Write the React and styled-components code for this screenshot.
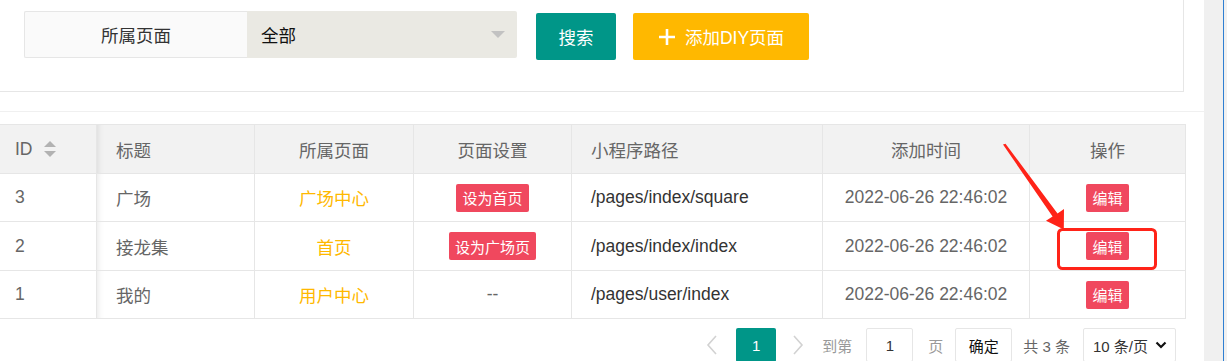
import React from 'react'
import styled, { createGlobalStyle } from 'styled-components'

const GlobalStyle = createGlobalStyle`
  html, body {
    margin: 0;
    padding: 0;
    background: #fff;
    overflow: hidden;
  }
  body {
    font-family: "Liberation Sans", "Noto Sans CJK SC", sans-serif;
  }
  * { box-sizing: border-box; }
`

const columns = [
  { key: 'id', title: 'ID', width: 97, align: 'flex-start', pad: 15, sort: true },
  { key: 'title', title: '标题', width: 158, align: 'flex-start', shadow: true },
  { key: 'page', title: '所属页面', width: 159, align: 'center' },
  { key: 'setting', title: '页面设置', width: 158, align: 'center' },
  { key: 'path', title: '小程序路径', width: 251, align: 'flex-start' },
  { key: 'time', title: '添加时间', width: 207, align: 'center' },
  { key: 'op', title: '操作', width: 156, align: 'center' },
]

const rows = [
  { id: 3, h: 48, title: '广场', page: '广场中心', setting: '设为首页', path: '/pages/index/square', time: '2022-06-26 22:46:02' },
  { id: 2, h: 49, title: '接龙集', page: '首页', setting: '设为广场页', path: '/pages/index/index', time: '2022-06-26 22:46:02' },
  { id: 1, h: 48, title: '我的', page: '用户中心', setting: null, path: '/pages/user/index', time: '2022-06-26 22:46:02' },
]

function renderCell(col, row) {
  switch (col.key) {
    case 'page':
      return <PageName>{row.page}</PageName>
    case 'setting':
      return row.setting ? <DangerBtn>{row.setting}</DangerBtn> : <span>--</span>
    case 'path':
      return <PathText>{row.path}</PathText>
    case 'op':
      return <DangerBtn>编辑</DangerBtn>
    default:
      return row[col.key]
  }
}

const SortIcon = () => (
  <SortSvg width="12" height="16" viewBox="0 0 12 16">
    <polygon points="0,6 6,0 12,6" fill="#b2b2b2" />
    <polygon points="0,10 12,10 6,16" fill="#b2b2b2" />
  </SortSvg>
)

const Annotation = () => (
  <Overlay width="1204" height="361" viewBox="0 0 1204 361">
    <polygon
      points="1003,144.5 1005.5,143.8 1057.5,213.4 1064,209 1063.8,229.5 1046,220.8 1052.6,216.6"
      fill="#ff2318"
    />
    <rect x="1058.5" y="229.5" width="97" height="39" rx="4" fill="none" stroke="#ff2318" strokeWidth="3" />
  </Overlay>
)

export default function App() {
  return (
    <Screen>
      <GlobalStyle />
      <Main>
        <FilterCard>
          <FormRow>
            <FieldLabel>所属页面</FieldLabel>
            <FieldSelect>
              <span>全部</span>
              <svg width="14" height="7" viewBox="0 0 14 7">
                <polygon points="0,0 14,0 7,7" fill="#c2c2c2" />
              </svg>
            </FieldSelect>
            <ActionBtn $bg="#009688" $w={80} $ml={19}>搜索</ActionBtn>
            <ActionBtn $bg="#ffb800" $w={176} $ml={17}>
              <svg width="18" height="18" viewBox="0 0 18 18">
                <path d="M9 1v16M1 9h16" stroke="#fff" strokeWidth="2.6" />
              </svg>
              <span>添加DIY页面</span>
            </ActionBtn>
          </FormRow>
        </FilterCard>
        <Divider />
        <Table>
          <Row $head $h={49}>
            {columns.map(col => (
              <Cell key={col.key} $w={col.width} $align={col.align} $pad={col.pad} $shadow={col.shadow}>
                {col.title}
                {col.sort && <SortIcon />}
              </Cell>
            ))}
          </Row>
          {rows.map(row => (
            <Row key={row.id} $h={row.h}>
              {columns.map(col => (
                <Cell key={col.key} $w={col.width} $align={col.align} $pad={col.pad} $shadow={col.shadow}>
                  {renderCell(col, row)}
                </Cell>
              ))}
            </Row>
          ))}
        </Table>
        <Pager>
          <Arrow width="12" height="20" viewBox="0 0 12 20" $ml={0} $mr={18}>
            <path d="M10 1L2 10l8 9" fill="none" stroke="#d2d2d2" strokeWidth="1.6" />
          </Arrow>
          <PageCurrent>1</PageCurrent>
          <Arrow width="12" height="20" viewBox="0 0 12 20" $ml={16} $mr={18}>
            <path d="M2 1l8 9-8 9" fill="none" stroke="#d2d2d2" strokeWidth="1.6" />
          </Arrow>
          <PagerText $color="#999">到第</PagerText>
          <PagerInput>1</PagerInput>
          <PagerText $color="#999" $ml={15}>页</PagerText>
          <PagerBtn>确定</PagerBtn>
          <PagerText $color="#666" $ml={11}>共 3 条</PagerText>
          <PagerSelect>
            <span>10 条/页</span>
            <svg width="12" height="8" viewBox="0 0 12 8">
              <path d="M1.5 1.5L6 6l4.5-4.5" fill="none" stroke="#111" strokeWidth="2.2" />
            </svg>
          </PagerSelect>
        </Pager>
        <Annotation />
      </Main>
      <SideStrip />
    </Screen>
  )
}

const Screen = styled.div`
  display: flex;
  width: 1227px;
  height: 361px;
  overflow: hidden;
`

const Main = styled.div`
  position: relative;
  flex: none;
  width: 1204px;
  background: #fff;
`

const SideStrip = styled.div`
  flex: 1;
  background: linear-gradient(to right, #f0f0f0 19px, #2f7fd2 19px, #2f7fd2 20px, #f0f0f0 20px);
`

const FilterCard = styled.div`
  width: 1184px;
  height: 92px;
  border-right: 1px solid #e6e6e6;
  border-bottom: 1px solid #e6e6e6;
  padding: 11px 0 0 24px;
`

const FormRow = styled.div`
  display: flex;
  align-items: flex-start;
`

const FieldLabel = styled.div`
  width: 223px;
  height: 47px;
  display: flex;
  align-items: center;
  justify-content: center;
  background: #fafafa;
  border: 1px solid #e6e6e6;
  border-right: none;
  border-radius: 2px 0 0 2px;
  font-size: 17.5px;
  color: #333;
`

const FieldSelect = styled.div`
  width: 270px;
  height: 47px;
  display: flex;
  align-items: center;
  justify-content: space-between;
  padding: 0 12px 0 14px;
  background: #eae9e3;
  border-radius: 0 2px 2px 0;
  font-size: 17.5px;
  color: #111;
`

const ActionBtn = styled.div`
  width: ${p => p.$w}px;
  height: 47px;
  margin: 2px 0 0 ${p => p.$ml}px;
  display: flex;
  align-items: center;
  justify-content: center;
  gap: 9px;
  background: ${p => p.$bg};
  border-radius: 2px;
  color: #fff;
  font-size: 17.5px;
`

const Divider = styled.div`
  margin-top: 19px;
  height: 1px;
  background: #f0f0f0;
`

const Table = styled.div`
  margin-top: 12px;
  width: 1186px;
  border-top: 1px solid #e6e6e6;
`

const Row = styled.div`
  display: flex;
  height: ${p => p.$h}px;
  background: ${p => (p.$head ? '#f2f2f2' : '#fff')};
  border-bottom: 1px solid #e6e6e6;
`

const Cell = styled.div`
  flex: none;
  width: ${p => p.$w}px;
  display: flex;
  align-items: center;
  justify-content: ${p => p.$align};
  padding: 0 19px 0 ${p => p.$pad ?? 19}px;
  border-right: 1px solid #e6e6e6;
  font-size: 17.5px;
  color: #666;
  white-space: nowrap;
  box-shadow: ${p => (p.$shadow ? 'inset 7px 0 6px -6px rgba(0, 0, 0, 0.1)' : 'none')};
`

const SortSvg = styled.svg`
  margin-left: 11px;
`

const PageName = styled.span`
  color: #ffb800;
`

const PathText = styled.span`
  color: #333;
`

const DangerBtn = styled.span`
  display: inline-flex;
  align-items: center;
  height: 28px;
  padding: 0 6px;
  background: #f0485e;
  border-radius: 2px;
  color: #fff;
  font-size: 15px;
`

const Pager = styled.div`
  display: flex;
  align-items: center;
  justify-content: flex-end;
  width: 1186px;
  padding-right: 10px;
  margin-top: 9px;
`

const Arrow = styled.svg`
  margin: 0 ${p => p.$mr}px 0 ${p => p.$ml}px;
`

const PageCurrent = styled.div`
  width: 40px;
  height: 34px;
  display: flex;
  align-items: center;
  justify-content: center;
  background: #009688;
  border-radius: 2px;
  color: #fff;
  font-size: 15px;
`

const PagerText = styled.span`
  margin-left: ${p => p.$ml ?? 0}px;
  font-size: 15px;
  color: ${p => p.$color};
`

const PagerInput = styled.div`
  width: 47px;
  height: 34px;
  margin-left: 14px;
  display: flex;
  align-items: center;
  justify-content: center;
  border: 1px solid #e6e6e6;
  border-radius: 2px;
  font-size: 15px;
  color: #333;
`

const PagerBtn = styled.div`
  width: 57px;
  height: 34px;
  margin-left: 12px;
  display: flex;
  align-items: center;
  justify-content: center;
  border: 1px solid #e6e6e6;
  border-radius: 2px;
  font-size: 15px;
  color: #111;
`

const PagerSelect = styled.div`
  width: 93px;
  height: 34px;
  margin-left: 13px;
  display: flex;
  align-items: center;
  justify-content: space-between;
  padding: 0 8px 0 9px;
  border: 1px solid #e6e6e6;
  border-radius: 2px;
  font-size: 15px;
  color: #333;
`

const Overlay = styled.svg`
  position: absolute;
  top: 0;
  left: 0;
  pointer-events: none;
`
